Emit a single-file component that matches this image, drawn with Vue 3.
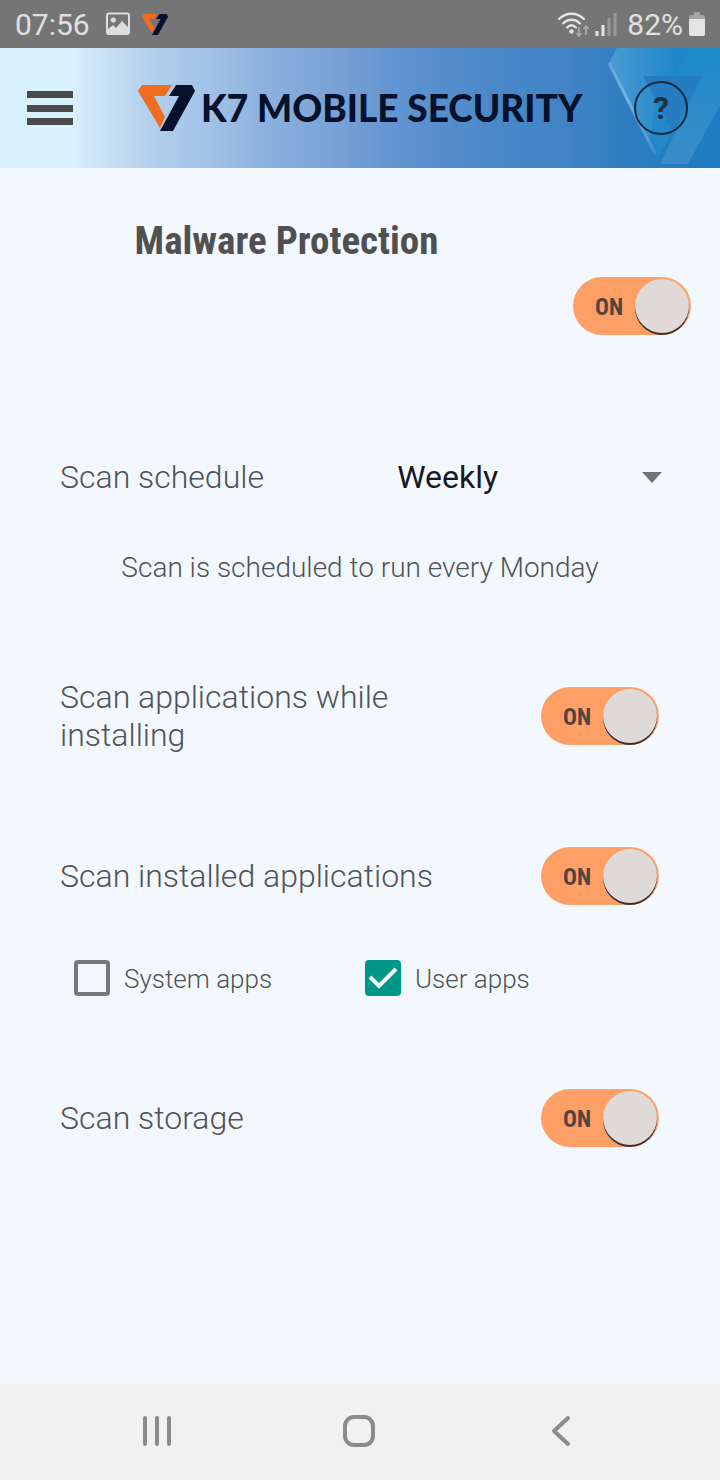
<script setup>
import { ref } from 'vue'

const protection = ref(true)
const schedule = ref('Weekly')
const whileInstalling = ref(true)
const installed = ref(true)
const systemApps = ref(false)
const userApps = ref(true)
const storage = ref(true)
</script>

<template>
  <div class="screen">
    <div class="status">
      <span class="clock">07:56</span>
      <svg class="picture" width="24" height="24" viewBox="0 0 24 24" aria-hidden="true">
        <rect x="1" y="1.500" width="22" height="20.500" rx="2" fill="none" stroke="#dedede" stroke-width="2" />
        <circle cx="7.300" cy="8" r="2.600" fill="#dedede" />
        <path d="M2 17l5-4 3 3 6-7 6 6v7H2z" fill="#dedede" />
      </svg>
      <svg class="mark" width="26" height="21" viewBox="0 0 57 46" aria-hidden="true">
        <path d="M4 0H34L27 11H16L27 32L22 43L0 6Z" fill="#ee6d21" />
        <path d="M38 0H54L57 6L35 46H22L41 11H31Z" fill="#06122c" />
      </svg>
      <span class="spacer"></span>
      <svg class="wifi" width="33" height="26" viewBox="0 0 33 26" aria-hidden="true">
        <g fill="none" stroke="#e4e4e4" stroke-width="2.300" stroke-linecap="round">
          <path d="M2 8C9 1 20 1 27 8" />
          <path d="M6 12.500C11 7.500 18 7.500 23 12.500" />
          <path d="M10 16.500C13 13.500 16 13.500 19 16.500" />
        </g>
        <circle cx="14.500" cy="20.500" r="2.200" fill="#e4e4e4" />
        <path d="M22 16V25M19.500 22L22 25L24.500 22M29 24V15M26.500 18L29 15L31.500 18" fill="none" stroke="#a8a8a8" stroke-width="1.800" />
      </svg>
      <svg class="signal" width="22" height="24" viewBox="0 0 22 24" aria-hidden="true">
        <path d="M2 24V19M8 24V13" stroke="#e4e4e4" stroke-width="3" />
        <path d="M14 24V6M20 24V1" stroke="#999" stroke-width="3" />
      </svg>
      <span class="percent">82%</span>
      <svg width="16" height="24" viewBox="0 0 16 24" aria-hidden="true">
        <path d="M5 0H11V3H14Q16 3 16 5V8H0V5Q0 3 2 3H5Z" fill="#a5a5a5" />
        <path d="M0 7H16V22Q16 24 14 24H2Q0 24 0 22Z" fill="#e4e4e4" />
      </svg>
    </div>

    <header class="header">
      <svg class="watermark" width="120" height="120" viewBox="0 0 120 120" aria-hidden="true">
        <defs>
          <linearGradient id="wing" x1="0" y1="0" x2="1" y2="0">
            <stop offset="0" stop-color="#4b9bd1" />
            <stop offset="0.600" stop-color="#1f87c9" />
            <stop offset="1" stop-color="#2387c8" />
          </linearGradient>
          <linearGradient id="stripe" x1="0" y1="0" x2="0" y2="1">
            <stop offset="0" stop-color="#1b8bc9" />
            <stop offset="1" stop-color="#3b8bc8" />
          </linearGradient>
          <linearGradient id="edge" x1="0" y1="0" x2="0" y2="1">
            <stop offset="0" stop-color="#7ab8e0" stop-opacity="0.600" />
            <stop offset="0.400" stop-color="#7ab8e0" stop-opacity="0.900" />
            <stop offset="1" stop-color="#7ab8e0" stop-opacity="0.200" />
          </linearGradient>
        </defs>
        <path d="M17 0H120V57L88 116H60L80 76L73 60L56 109L9 15Z" fill="url(#wing)" />
        <path d="M73 84L58 109L50 94L56 50H80Z" fill="#2387c8" />
        <path d="M91 0H120V57L88 116H60L102 28H76Z" fill="url(#stripe)" />
        <path d="M43 28H102L73 84Z" fill="#257cc0" />
        <path d="M9 15L55 106" stroke="url(#edge)" stroke-width="3" fill="none" />
      </svg>
      <button class="menu" type="button" aria-label="Menu">
        <svg width="46" height="34" viewBox="0 0 46 34" aria-hidden="true">
          <path d="M0 3.500H46M0 17.500H46M0 30.500H46" stroke="#4b4b4b" stroke-width="7" />
        </svg>
      </button>
      <div class="brand">
        <svg width="57" height="46" viewBox="0 0 57 46" aria-hidden="true">
          <path d="M4 0H34L27 11H16L27 32L22 43L0 6Z" fill="#ee6d21" />
          <path d="M38 0H54L57 6L35 46H22L41 11H31Z" fill="#06122c" />
        </svg>
        <span class="name">K7 MOBILE SECURITY</span>
      </div>
      <button class="help" type="button" aria-label="Help">?</button>
    </header>

    <main class="content">
      <div class="top">
        <h1 id="title">Malware Protection</h1>
        <label class="switch">
          <input v-model="protection" type="checkbox" role="switch" aria-labelledby="title" />
          <span class="state">{{ protection ? 'ON' : 'OFF' }}</span>
        </label>
      </div>

      <div class="row schedule">
        <label for="schedule">Scan schedule</label>
        <div class="picker">
          <select id="schedule" v-model="schedule">
            <option>Daily</option>
            <option>Weekly</option>
            <option>Monthly</option>
          </select>
          <svg width="20" height="11" viewBox="0 0 20 11" aria-hidden="true">
            <path d="M0 0H20L10 11Z" fill="#6f7377" />
          </svg>
        </div>
      </div>
      <p class="note">Scan is scheduled to run every Monday</p>

      <div class="row installing">
        <label for="installing">Scan applications while installing</label>
        <div class="switch">
          <input id="installing" v-model="whileInstalling" type="checkbox" role="switch" />
          <span class="state">{{ whileInstalling ? 'ON' : 'OFF' }}</span>
        </div>
      </div>

      <div class="row installed">
        <label for="installed">Scan installed applications</label>
        <div class="switch">
          <input id="installed" v-model="installed" type="checkbox" role="switch" />
          <span class="state">{{ installed ? 'ON' : 'OFF' }}</span>
        </div>
      </div>

      <div class="checks">
        <label class="check">
          <span class="box">
            <input v-model="systemApps" type="checkbox" />
            <svg v-if="systemApps" viewBox="0 0 36 36" aria-hidden="true">
              <path d="M5 17L14 26L31 9" fill="none" stroke="#f3f8ff" stroke-width="4" />
            </svg>
          </span>
          System apps
        </label>
        <label class="check">
          <span class="box">
            <input v-model="userApps" type="checkbox" />
            <svg v-if="userApps" viewBox="0 0 36 36" aria-hidden="true">
              <path d="M5 17L14 26L31 9" fill="none" stroke="#f3f8ff" stroke-width="4" />
            </svg>
          </span>
          User apps
        </label>
      </div>

      <div class="row storage">
        <label for="storage">Scan storage</label>
        <div class="switch">
          <input id="storage" v-model="storage" type="checkbox" role="switch" />
          <span class="state">{{ storage ? 'ON' : 'OFF' }}</span>
        </div>
      </div>
    </main>

    <nav class="nav" aria-label="System">
      <button type="button" aria-label="Recent apps">
        <svg width="32" height="32" viewBox="0 0 32 32" aria-hidden="true">
          <path d="M4 3V29M16 3V29M28 3V29" stroke="#8b8b8b" stroke-width="4" stroke-linecap="round" />
        </svg>
      </button>
      <button type="button" aria-label="Home">
        <svg width="32" height="32" viewBox="0 0 32 32" aria-hidden="true">
          <rect x="2" y="2" width="28" height="28" rx="9" fill="none" stroke="#8b8b8b" stroke-width="4" />
        </svg>
      </button>
      <button type="button" aria-label="Back">
        <svg width="32" height="32" viewBox="0 0 32 32" aria-hidden="true">
          <path d="M23 3L9 16L23 29" fill="none" stroke="#8b8b8b" stroke-width="4" stroke-linecap="round" stroke-linejoin="round" />
        </svg>
      </button>
    </nav>
  </div>
</template>

<style>
body {
  margin: 0;
  background: #f3f8ff;
}
</style>

<style scoped>
.screen {
  display: flex;
  flex-direction: column;
  min-height: 100vh;
  font-family: Roboto, "Liberation Sans", sans-serif;
  font-weight: 300;
  color: #4f5357;
  background: #f3f8ff;
}
.screen *,
.screen {
  box-sizing: border-box;
}
svg {
  display: block;
  flex: none;
}
button {
  padding: 0;
  border: 0;
  background: none;
  font-family: inherit;
}
.status {
  display: flex;
  align-items: center;
  height: 48px;
  padding: 0 15px;
  background: #757575;
  color: #e0e0e0;
  font-size: 30px;
  font-weight: 400;
}
.picture {
  margin-left: 16px;
}
.mark {
  margin-left: 12px;
}
.spacer {
  flex: 1;
}
.signal {
  margin-left: 5px;
}
.percent {
  margin: 0 6px 0 10px;
}
.header {
  position: relative;
  display: flex;
  align-items: center;
  height: 120px;
  padding: 0 32px 0 27px;
  background: linear-gradient(90deg, #d9f0fd 0%, #d9f0fd 10%, #c6dff3 15%, #b3d0ec 21%, #a4c3e8 28%, #8cb1de 37%, #759fd5 48%, #5f93d0 56%, #4b88c8 68%, #4183c4 79%, #2c7dc0 88%, #1d7bc1 100%);
}
.watermark {
  position: absolute;
  top: 0;
  right: 0;
}
.menu,
.help {
  position: relative;
  flex: none;
}
.brand {
  display: flex;
  flex: 1;
  align-items: center;
  gap: 6px;
  margin-left: 65px;
  color: #06122c;
}
.name {
  font-family: Lato, "Open Sans", sans-serif;
  font-size: 37px;
  font-weight: 900;
  line-height: 44px;
  white-space: nowrap;
}
.help {
  width: 54px;
  height: 54px;
  border: 2px solid #12293e;
  border-radius: 50%;
  color: #1d3245;
  font-size: 32px;
  font-weight: 700;
}
.content {
  flex: 1;
  padding-top: 49px;
}
.top {
  display: grid;
  grid-template-columns: 1fr 118px;
  padding-right: 29px;
}
h1 {
  margin: 0;
  color: #505050;
  font-family: "Roboto Condensed", Roboto, sans-serif;
  font-size: 39px;
  font-weight: 700;
  line-height: 48px;
  text-align: center;
  white-space: nowrap;
}
.top .switch {
  margin-top: 60px;
}
.switch {
  position: relative;
  flex: none;
  width: 118px;
  height: 58px;
}
.switch input {
  display: block;
  appearance: none;
  width: 100%;
  height: 100%;
  margin: 0;
  padding: 2px;
  border-radius: 29px;
  background: #b9bec4;
}
.switch input:checked {
  background: #fe9f66;
}
.switch input::before {
  content: "";
  display: block;
  width: 54px;
  height: 54px;
  border-radius: 50%;
  background: #dfd9d8;
  box-shadow: 0 2px 0 #3a302d;
}
.switch input:checked::before {
  margin-left: auto;
}
.state {
  position: absolute;
  top: 17px;
  left: 22px;
  color: #504541;
  font-family: "Roboto Condensed", Roboto, sans-serif;
  font-size: 23px;
  font-weight: 700;
  line-height: 28px;
  pointer-events: none;
}
.row {
  display: flex;
  align-items: center;
  justify-content: space-between;
  gap: 96px;
  padding: 0 61px 0 60px;
  font-size: 32px;
  line-height: 38px;
}
.schedule {
  height: 48px;
  margin-top: 118px;
  padding-right: 58px;
  gap: 0;
}
.schedule label {
  flex: 1;
}
.picker {
  position: relative;
  display: flex;
  align-items: center;
  width: 44%;
}
.picker select {
  appearance: none;
  width: 100%;
  padding: 0;
  border: 0;
  background: none;
  color: #17191b;
  font-family: inherit;
  font-size: 32px;
  font-weight: 400;
  line-height: 48px;
}
.picker svg {
  position: absolute;
  right: 0;
  pointer-events: none;
}
.note {
  margin: 47px 0 0;
  font-size: 28px;
  line-height: 40px;
  text-align: center;
}
.installing {
  margin-top: 90px;
}
.installed {
  margin-top: 93px;
}
.checks {
  display: grid;
  grid-template-columns: 291px 1fr;
  margin-top: 55px;
  padding-left: 74px;
  font-size: 26px;
  line-height: 38px;
}
.check {
  display: flex;
  gap: 14px;
}
.box {
  position: relative;
  width: 36px;
  height: 36px;
}
.box input {
  display: block;
  appearance: none;
  width: 100%;
  height: 100%;
  margin: 0;
  border: 4px solid #75787b;
  border-radius: 4px;
}
.box input:checked {
  border-color: #009688;
  background: #009688;
}
.box svg {
  position: absolute;
  inset: 0;
  pointer-events: none;
}
.storage {
  margin-top: 91px;
}
.nav {
  display: grid;
  grid-template-columns: repeat(3, 1fr);
  height: 96px;
  padding: 0 58px 2px 56px;
  background: #f1f1f1;
}
.nav button {
  display: grid;
  place-items: center;
}
</style>
